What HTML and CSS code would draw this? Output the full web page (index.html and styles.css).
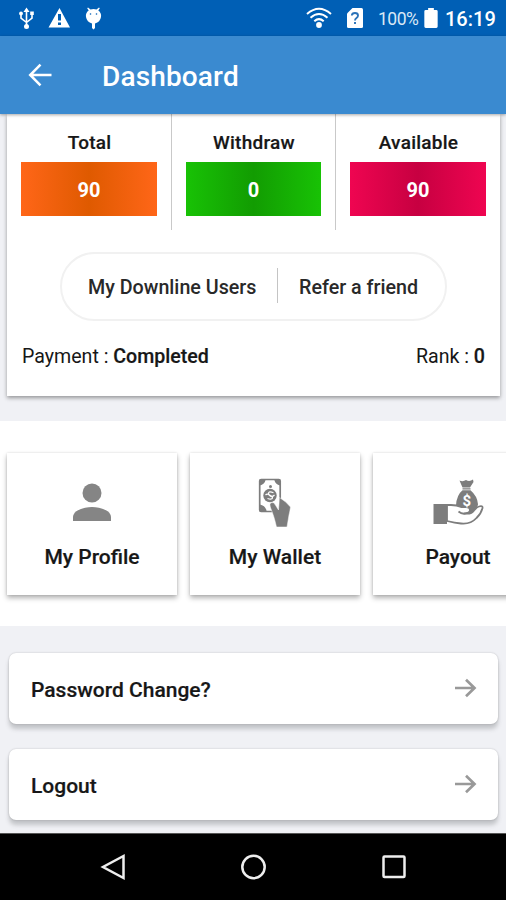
FILE: index.html
```
<!DOCTYPE html>
<html lang="en">
<head>
<meta charset="utf-8">
<title>Dashboard</title>
<link rel="stylesheet" href="styles.css">
</head>
<body>
<div class="screen">
  <div class="status">
    <svg class="status-icons" width="90" height="36" viewBox="0 0 90 36" fill="#fff">
      <g fill="none" stroke="#fff" stroke-width="1.600"><path d="M12.500 11v15M7 14v4l5.500 4.500M18 14v4l-5.500 4.500"/></g>
      <path d="M12.500 7.500l3 4.500h-6zM16.200 11.500h3.600v3.600h-3.600z"/><circle cx="7" cy="13.500" r="1.900"/><circle cx="12.500" cy="26.500" r="2.500"/>
      <path fill-rule="evenodd" d="M45.500 8L56 27.500H34.500zM44 14v6.500h3V14zm0 8.500V25h3v-2.500z"/>
      <path d="M74 7.500l2.500 2q3-1 6 0l2.500-2 .8.800-1.500 2.200q3.400 2.500 2.700 6.500-.9 5-6 6.500v4.500l-1.500 1.500-1.500-1.500V23.500q-5.100-1.500-6-6.500-.7-4 2.700-6.500L73.200 8.300z"/>
      <circle cx="76.500" cy="14" r=".8" fill="#005fb5"/><circle cx="82.500" cy="14" r=".8" fill="#005fb5"/>
    </svg>
    <div class="status-right">
      <svg width="26" height="22" viewBox="0 0 26 22" fill="none" stroke="#fff" stroke-width="2"><path d="M1 7Q13-3.500 25 7M4.500 10.700q8.500-7.400 17 0M8.300 14.300q4.700-4.300 9.400 0"/><circle cx="13" cy="18" r="2.900" fill="#fff" stroke="none"/></svg>
      <svg class="sim" width="16" height="20" viewBox="0 0 16 20"><path fill="#fff" d="M5.500 0H14.500Q16 0 16 1.500v17Q16 20 14.500 20h-13Q0 20 0 18.500V5.500z"/><path d="M4.800 7.500Q5 5 8 5t3 2.500Q11 9 9.500 10 8 11 8 12.500M8 14v2" fill="none" stroke="#2b72b8" stroke-width="1.900"/></svg>
      <span class="percent">100%</span>
      <svg class="battery" width="14" height="20" viewBox="0 0 14 21"><path fill="#fff" d="M4 0h6v2h2.500Q14 2 14 3.500v16q0 1.500-1.500 1.500h-11Q0 21 0 19.500v-16Q0 2 1.500 2H4z"/></svg>
      <span class="clock">16:19</span>
    </div>
  </div>
  <header class="bar">
    <svg width="24" height="24" viewBox="0 0 24 24" fill="none" stroke="#fff" stroke-width="2.500"><path d="M23.500 12H2.500M12.500 1.700L2.200 12l10.300 10.300"/></svg>
    <h1>Dashboard</h1>
  </header>
  <main>
    <section class="summary">
      <div class="card">
        <div class="stats">
          <div class="stat"><span>Total</span><b class="value orange">90</b></div>
          <div class="stat"><span>Withdraw</span><b class="value green">0</b></div>
          <div class="stat"><span>Available</span><b class="value red">90</b></div>
        </div>
        <div class="pill"><span class="downline">My Downline Users</span><i></i><span class="refer">Refer a friend</span></div>
        <div class="info"><span class="payment">Payment : <b>Completed</b></span><span class="rank">Rank : <b>0</b></span></div>
      </div>
    </section>
    <section class="tiles">
      <div class="tile">
        <svg width="52" height="52" viewBox="0 0 52 52" fill="#858585"><circle cx="26" cy="16" r="9.500"/><path d="M7 44v-4c0-6.500 11-10 19-10s19 3.500 19 10v4z"/></svg>
        <span>My Profile</span>
      </div>
      <div class="tile">
        <svg width="52" height="52" viewBox="0 0 52 52" fill="#7d7d7d"><rect x="10.700" y="2.500" width="20.500" height="32" rx="1.500" fill="#fff" stroke="#7d7d7d" stroke-width="1.700"/><path d="M10.700 2.500h6q-1 5-6 6zM31.200 2.500h-6q1 5 6 6zM10.700 34.500v-7q6 1 7 7z"/><circle cx="21.500" cy="9.500" r="1.500"/><circle cx="21" cy="18.500" r="6.700"/><path d="M24.500 15.700q-5-2-5 .8 0 1.500 2 2t2 2q0 2.500-5 1M16.500 18q2-2 4 .5t5-.5" stroke="#fff" stroke-width="1.200" fill="none"/><path d="M21.300 30q-1.200-3.500 1-4.300t3.500 1.300L29.500 33 30.500 20.500q6 3.500 11 9.500-.5 4-1.500 8l-2 12H27.500l-1.500-6q-1-4-2.500-8z" stroke="#fff" stroke-width=".5"/></svg>
        <span class="wallet">My Wallet</span>
      </div>
      <div class="tile">
        <svg width="52" height="52" viewBox="0 0 52 52"><path fill="#7d7d7d" d="M27.500 3.500q3.500 1.500 6.500-.500 3.500 2 7-.500l.5 2.500-3.500 5.500h-7.500zM30.500 11.200h8v1.200h-8zM30.500 13.200h8q7 6 7.500 14-.5 5-4 7.500L35 38l-6-5-5-4.500Q24.500 18 30.500 13.200z"/><path fill="#fff" stroke="#7d7d7d" stroke-width="1.800" stroke-linejoin="round" d="M15 28h4q6 0 10 2h5q4 0 4 3t-5.500 3.500q7 1 9.500-3 3-3.500 5-4 4-1 3.500 1.500-1.500 6-6 10-6 6.500-15.500 5.500-6-.5-14-2.500z"/><path d="M26.500 34.500q4 3.500 9 1.500" fill="none" stroke="#7d7d7d" stroke-width="1.800"/><path fill="#7d7d7d" d="M1.500 27h13.500v20h-13.500z"/><text x="34.800" y="29" text-anchor="middle" class="coin">$</text></svg>
        <span>Payout</span>
      </div>
    </section>
    <section class="links">
      <div class="row"><span>Password Change?</span><svg width="22" height="20" viewBox="0 0 22 20" fill="none" stroke="#999" stroke-width="2.700"><path d="M0 10h19.500M11 1.800L19.500 10 11 18.200"/></svg></div>
      <div class="row logout"><span>Logout</span><svg width="22" height="20" viewBox="0 0 22 20" fill="none" stroke="#999" stroke-width="2.700"><path d="M0 10h19.500M11 1.800L19.500 10 11 18.200"/></svg></div>
    </section>
  </main>
  <nav>
    <svg width="28" height="28" viewBox="0 0 28 28"><path d="M24.500 3v22L4 14z"/></svg>
    <svg width="28" height="28" viewBox="0 0 28 28"><circle cx="13.500" cy="14" r="11.200"/></svg>
    <svg width="28" height="28" viewBox="0 0 28 28"><rect x="3.500" y="3.500" width="21" height="20.500" rx="1"/></svg>
  </nav>
</div>
</body>
</html>
```
FILE: styles.css
```
* { box-sizing: border-box; }
body { margin: 0; font-family: Roboto, sans-serif; color: #171717; }
.screen { width: 506px; height: 900px; display: flex; flex-direction: column; overflow: hidden; background: #fff; }
.status { height: 36px; flex: none; display: flex; justify-content: space-between; background: #005fb5; padding: 0 12px 0 14px; color: #fff; }
.status-right { display: flex; align-items: center; }
.sim { margin-left: 15px; }
.percent { margin: 2px 0 0 15px; width: 40px; font-size: 17.500px; letter-spacing: -.5px; color: #d9e8f6; }
.battery { margin-left: 6px; }
.clock { margin: 2px 0 0 7px; width: 49px; font-size: 20px; font-weight: 500; white-space: nowrap; }
.bar { height: 78px; flex: none; display: flex; align-items: center; background: #3a8ad0; padding-left: 28px; color: #fff; position: relative; box-shadow: 0 1px 3px rgba(0,0,0,.35); }
.bar h1 { margin: 3px 0 0 50px; font-size: 28px; line-height: 34px; font-weight: 500; letter-spacing: .15px; }
main { flex: 1; min-height: 0; overflow: hidden; }
.summary { height: 307px; background: #f0f1f5; padding: 0 6px 0 7px; }
.card { height: 282px; background: #fff; box-shadow: 0 2px 4px rgba(0,0,0,.38); }
.stats { height: 116px; display: grid; grid-template-columns: 165px 164px 164px; }
.stat { display: flex; flex-direction: column; align-items: center; padding: 17px 14px 0; border-right: 1px solid #c9c9c9; font-size: 19px; line-height: 24px; font-weight: 500; letter-spacing: .25px; -webkit-text-stroke: .2px #171717; }
.stat > span { margin-left: 1px; }
.stat:last-child { border: 0; }
.value { align-self: stretch; height: 54px; margin-top: 7px; display: flex; align-items: center; justify-content: center; color: #fff; font-size: 20px; letter-spacing: 0; font-weight: 700; padding-top: 2px; -webkit-text-stroke: 0; }
.orange { background: linear-gradient(90deg, #ff6618, #df5a00 50%, #ff6618); }
.green { background: linear-gradient(90deg, #18c205, #129c02 50%, #18c205); }
.red { background: linear-gradient(90deg, #ef0551, #c70041 50%, #ef0551); }
.pill { width: 387px; height: 69px; margin: 22px 0 0 53px; border: 2px solid #f1f1f1; border-radius: 35px; display: flex; align-items: center; font-size: 19.700px; font-weight: 500; padding: 2px 26px 0; color: #292929; white-space: nowrap; }
.pill i { width: 1px; height: 35px; background: #c4c4c4; margin: -4px 21px 0 20px; flex: none; }
.pill .downline { width: 169px; }
.info { display: flex; justify-content: space-between; padding: 24px 15px 0; font-size: 19.600px; line-height: 24px; }
.info b { font-weight: 500; -webkit-text-stroke: .2px #171717; }
.tiles { height: 205px; background: #fff; padding: 32px 0 0 7px; display: flex; gap: 13px; overflow: hidden; }
.tile { width: 170px; height: 142px; flex: none; background: #fff; box-shadow: 0 3px 5px rgba(0,0,0,.3), 0 0 2px rgba(0,0,0,.12); display: flex; flex-direction: column; align-items: center; padding-top: 24px; font-size: 21px; line-height: 26px; font-weight: 500; }
.tile span { margin-top: 15px; -webkit-text-stroke: .2px #171717; }
.coin { font: 700 15px Roboto, sans-serif; fill: #fff; }
.links { height: 207px; background: #f0f1f5; padding: 27px 8px 0 9px; }
.row { height: 71px; margin-bottom: 25px; background: #fff; border-radius: 7px; display: flex; align-items: center; justify-content: space-between; padding: 0 21px 0 22px; font-size: 21px; font-weight: 500; box-shadow: 0 5px 4px rgba(80,83,86,.28), 0 0 2px rgba(0,0,0,.22); }
.row span { margin-top: 2px; -webkit-text-stroke: .2px #171717; }
.row svg { margin-top: -1px; }
nav { height: 67px; flex: none; background: #000; border-top: 1px solid #555; display: flex; align-items: center; justify-content: space-between; padding: 0 98px 0 99px; }
nav svg { fill: none; stroke: #eee; stroke-width: 2.500; }
```
